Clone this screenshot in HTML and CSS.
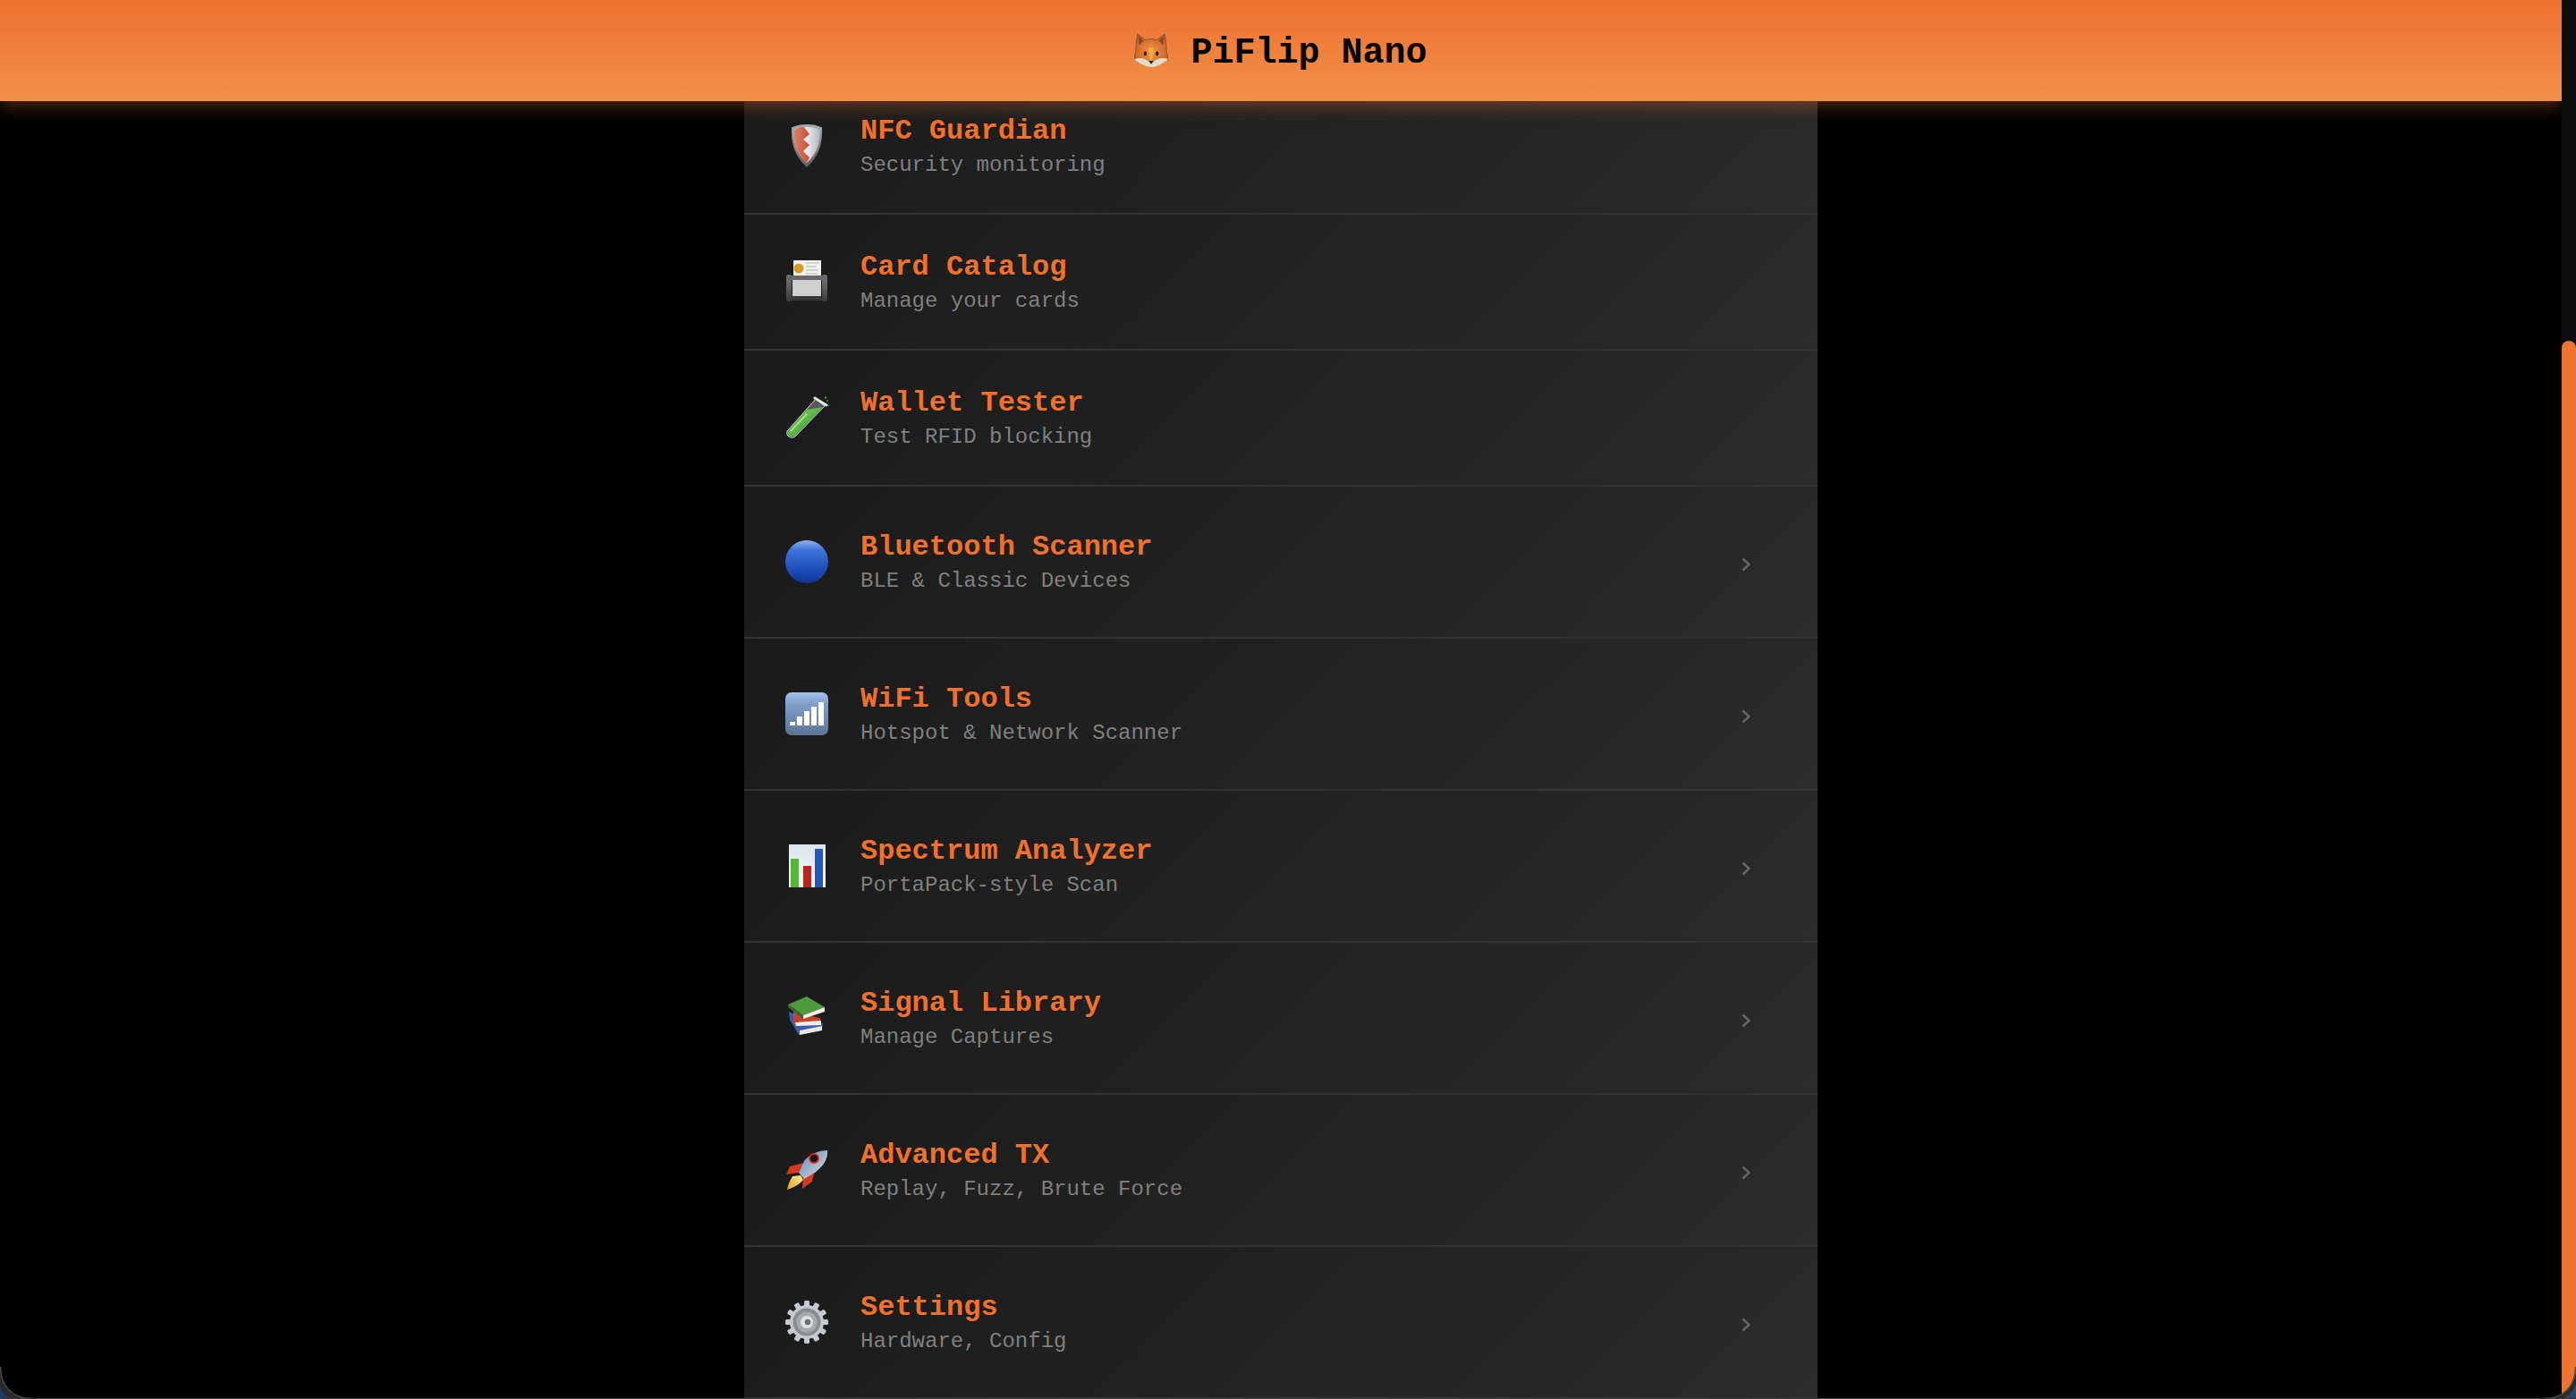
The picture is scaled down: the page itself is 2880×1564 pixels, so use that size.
FILE: index.html
```html
<!DOCTYPE html>
<html>
   <head>
      <title>PiFlip Nano</title>
      <link rel="stylesheet" href="styles.css">
   </head>
   <body>
      <div id="window">
         <main id="page">
            <header id="topbar">
               <svg class="fox" viewBox="0 0 40 40">
                  <defs>
                     <radialGradient id="foxFur" cx=".5" cy=".55" r=".6">
                        <stop offset="0" stop-color="#f09a45"/>
                        <stop offset="1" stop-color="#c9531f"/>
                     </radialGradient>
                  </defs>
                  <path d="M4 1 L13 8 C17 6.500 23 6.500 27 8 L36 1 C37.500 8 38 15 38 20 L40 31 L20 39.500 L0 31 L2 20 C2 15 2.500 8 4 1 Z" fill="url(#foxFur)" stroke="#6a5240" stroke-width=".8"/>
                  <path d="M5.500 4 L11 9 L6 14 Z M34.500 4 L29 9 L34 14 Z" fill="#7a4a2a"/>
                  <path d="M0 31 C6 28 13 30 20 35 C27 30 34 28 40 31 C33 36 27 40 20 40 C13 40 7 36 0 31 Z" fill="#e0dccd"/>
                  <path d="M17 17 L23 17 L21.500 32 L18.500 32 Z" fill="#f7ad3e"/>
                  <ellipse cx="13" cy="24" rx="1.800" ry="2.800" fill="#2a2622"/>
                  <ellipse cx="27" cy="24" rx="1.800" ry="2.800" fill="#2a2622"/>
                  <path d="M17 32.500 L23 32.500 L20 36.500 Z" fill="#1d1a18"/>
               </svg>
               <h1>PiFlip Nano</h1>
            </header>

            <div id="menu">
               <div class="row">
                  <svg class="icon" viewBox="0 0 48 48">
                     <defs>
                        <linearGradient id="shieldRim" x1="0" y1="0" x2="0" y2="1">
                           <stop offset="0" stop-color="#a8aaac"/>
                           <stop offset="1" stop-color="#5c5e60"/>
                        </linearGradient>
                        <linearGradient id="shieldSteel" x1="0" y1="0" x2="1" y2="0">
                           <stop offset=".4" stop-color="#f4f5f7"/>
                           <stop offset="1" stop-color="#b4b8c0"/>
                        </linearGradient>
                        <linearGradient id="shieldRed" x1="0" y1="0" x2="1" y2="0">
                           <stop offset="0" stop-color="#dd8068"/>
                           <stop offset="1" stop-color="#c94f36"/>
                        </linearGradient>
                     </defs>
                     <path d="M24 0 C30 0 36 1 41 3.500 C41.500 20 39 34 24 48 C9 34 6.500 20 7 3.500 C12 1 18 0 24 0 Z" fill="url(#shieldRim)"/>
                     <path d="M24 3 C29 3 34 4 38.500 6 C39 20 36 32 24 43 C12 32 9 20 9.500 6 C14 4 19 3 24 3 Z" fill="url(#shieldSteel)"/>
                     <path d="M21 3 C17 3.300 13 4.400 9.500 6 C9 20 12 32 24 43 L27 37 L20 30 L27 23 L20 17 L27 11 Z" fill="url(#shieldRed)"/>
                  </svg>
                  <div class="label">
                     <div class="name">NFC Guardian</div>
                     <div class="desc">Security monitoring</div>
                  </div>
               </div>

               <div class="row">
                  <svg class="icon" viewBox="0 0 48 48">
                     <defs>
                        <linearGradient id="cardLeg" x1="0" y1="0" x2="0" y2="1">
                           <stop offset="0" stop-color="#77797c"/>
                           <stop offset="1" stop-color="#3a3b3d"/>
                        </linearGradient>
                     </defs>
                     <rect x="9" y="0" width="31" height="20" fill="#f1f1ee"/>
                     <circle cx="15" cy="9" r="5.500" fill="#d99a28"/>
                     <path d="M23 3h14M23 7h12M23 11h14M23 15h13" stroke="#b4b4b0" stroke-width="1"/>
                     <rect x="8" y="22" width="32" height="18" fill="#d0d0d0"/>
                     <rect x="1" y="16" width="6" height="30" rx="2.500" fill="url(#cardLeg)"/>
                     <rect x="41" y="16" width="6" height="30" rx="2.500" fill="url(#cardLeg)"/>
                     <rect x="1" y="17" width="46" height="5" rx="1.500" fill="#66686b"/>
                     <rect x="6" y="40" width="36" height="5" fill="#38393b"/>
                  </svg>
                  <div class="label">
                     <div class="name">Card Catalog</div>
                     <div class="desc">Manage your cards</div>
                  </div>
               </div>

               <div class="row">
                  <svg class="icon" viewBox="0 0 48 48">
                     <defs>
                        <linearGradient id="tubeGreen" x1="0" y1="0" x2="1" y2="1">
                           <stop offset="0" stop-color="#86dc62"/>
                           <stop offset="1" stop-color="#2f8e2e"/>
                        </linearGradient>
                     </defs>
                     <path d="M34 3 L44 11 L11 45 C7 48 0 45 2 39 Z" fill="#55585a" stroke="#d4d6d4" stroke-width="1"/>
                     <path d="M24 15 L42 12 L11 44.500 C7 47 1 44 3 39 Z" fill="url(#tubeGreen)"/>
                     <path d="M6 39 L24 20" stroke="#b4ee9e" stroke-width="1.400" stroke-linecap="round"/>
                     <path d="M33 2 L46 10" stroke="#e2e4e2" stroke-width="3" stroke-linecap="round"/>
                     <circle cx="45" cy="1.500" r="1.200" fill="#3fa33a"/>
                     <circle cx="47" cy="5" r=".9" fill="#3fa33a"/>
                  </svg>
                  <div class="label">
                     <div class="name">Wallet Tester</div>
                     <div class="desc">Test RFID blocking</div>
                  </div>
               </div>

               <div class="row more">
                  <svg class="icon" viewBox="0 0 48 48">
                     <defs>
                        <linearGradient id="blueBall" x1="0" y1="0" x2="0" y2="1">
                           <stop offset="0" stop-color="#8fb4ee"/>
                           <stop offset=".22" stop-color="#3f74dc"/>
                           <stop offset=".7" stop-color="#1c4cb8"/>
                           <stop offset="1" stop-color="#113294"/>
                        </linearGradient>
                     </defs>
                     <circle cx="24" cy="24" r="24" fill="url(#blueBall)"/>
                  </svg>
                  <div class="label">
                     <div class="name">Bluetooth Scanner</div>
                     <div class="desc">BLE &amp; Classic Devices</div>
                  </div>
                  <svg class="chevron" viewBox="0 0 10 16"><path d="M1.500 1.500 L8.500 8 L1.500 14.500"/></svg>
               </div>

               <div class="row more">
                  <svg class="icon" viewBox="0 0 48 48">
                     <defs>
                        <linearGradient id="signalTile" x1="0" y1="0" x2="0" y2="1">
                           <stop offset="0" stop-color="#a2c2e8"/>
                           <stop offset=".3" stop-color="#7c9cc8"/>
                           <stop offset="1" stop-color="#5e7494"/>
                        </linearGradient>
                     </defs>
                     <rect width="48" height="48" rx="7" fill="url(#signalTile)"/>
                     <rect x="5" y="33" width="6" height="4" fill="#fff"/>
                     <rect x="13" y="27" width="6" height="10" fill="#fff"/>
                     <rect x="21" y="21" width="6" height="16" fill="#fff"/>
                     <rect x="29" y="16" width="6" height="21" fill="#fff"/>
                     <rect x="37" y="11" width="6" height="26" fill="#fff"/>
                  </svg>
                  <div class="label">
                     <div class="name">WiFi Tools</div>
                     <div class="desc">Hotspot &amp; Network Scanner</div>
                  </div>
                  <svg class="chevron" viewBox="0 0 10 16"><path d="M1.500 1.500 L8.500 8 L1.500 14.500"/></svg>
               </div>

               <div class="row more">
                  <svg class="icon" viewBox="0 0 48 48">
                     <defs>
                        <linearGradient id="chartPaper" x1="0" y1="0" x2="0" y2="1">
                           <stop offset="0" stop-color="#dbe5ec"/>
                           <stop offset="1" stop-color="#f6f8fa"/>
                        </linearGradient>
                     </defs>
                     <rect x="4" y="0" width="41" height="48" fill="url(#chartPaper)"/>
                     <rect x="6" y="16" width="9" height="32" fill="#57b53c"/>
                     <rect x="20" y="24" width="9" height="24" fill="#b5281e"/>
                     <rect x="33" y="5" width="9" height="43" fill="#2459bc"/>
                  </svg>
                  <div class="label">
                     <div class="name">Spectrum Analyzer</div>
                     <div class="desc">PortaPack-style Scan</div>
                  </div>
                  <svg class="chevron" viewBox="0 0 10 16"><path d="M1.500 1.500 L8.500 8 L1.500 14.500"/></svg>
               </div>

               <div class="row more">
                  <svg class="icon" viewBox="0 0 48 48">
                     <path d="M4 17 L5 26 L15 43 L41 37 L42 30 L20 24 Z" fill="#3b5cab"/>
                     <path d="M16 38 L41 33 L41 38 L16 43 Z" fill="#e8e8e0"/>
                     <path d="M9 16 L9 29 L12 33 L40 31 L39 24 L20 20 Z" fill="#c8402e"/>
                     <path d="M11 29 L40 27 L40 32 L12 33 Z" fill="#eeeee6"/>
                     <path d="M3 9 L24 0 L44 12 L20 21 Z" fill="#4f9a3e"/>
                     <path d="M3 9 L20 21 L20 25 L3 12 Z" fill="#2f6e2a"/>
                     <path d="M20 21 L44 12 L44 17 L20 25 Z" fill="#f2f2ea"/>
                  </svg>
                  <div class="label">
                     <div class="name">Signal Library</div>
                     <div class="desc">Manage Captures</div>
                  </div>
                  <svg class="chevron" viewBox="0 0 10 16"><path d="M1.500 1.500 L8.500 8 L1.500 14.500"/></svg>
               </div>

               <div class="row more">
                  <svg class="icon" viewBox="0 0 48 48">
                     <defs>
                        <linearGradient id="rocketBody" x1="0" y1="0" x2="1" y2="1">
                           <stop offset="0" stop-color="#4f8ad0"/>
                           <stop offset=".55" stop-color="#a8b8c8"/>
                           <stop offset="1" stop-color="#d4d8da"/>
                        </linearGradient>
                        <linearGradient id="rocketFlame" x1="1" y1="0" x2="0" y2="1">
                           <stop offset="0" stop-color="#fff0a0"/>
                           <stop offset="1" stop-color="#f09a18"/>
                        </linearGradient>
                     </defs>
                     <path d="M20 16 L5 20 L1 29 L15 27 Z" fill="#d8391f"/>
                     <path d="M32 28 L30 37 L19 45 L20 32 Z" fill="#d8391f"/>
                     <path d="M8 31 C5 36 3 41 2 46 C8 44 15 41 20 35 L17 30 Z" fill="url(#rocketFlame)"/>
                     <path d="M47 2 C38 2 27 6 21 14 L15 27 L21 34 L33 27 C42 20 48 12 47 2 Z" fill="url(#rocketBody)"/>
                     <circle cx="32" cy="11" r="5" fill="#141416" stroke="#d22c20" stroke-width="2"/>
                  </svg>
                  <div class="label">
                     <div class="name">Advanced TX</div>
                     <div class="desc">Replay, Fuzz, Brute Force</div>
                  </div>
                  <svg class="chevron" viewBox="0 0 10 16"><path d="M1.500 1.500 L8.500 8 L1.500 14.500"/></svg>
               </div>

               <div class="row more">
                  <svg class="icon" viewBox="0 0 48 48">
                     <g fill="#c4c8cf">
                        <circle cx="24" cy="24" r="19"/>
                        <rect x="21" y="0" width="6" height="48" rx="1.500"/>
                        <rect x="21" y="0" width="6" height="48" rx="1.500" transform="rotate(30 24 24)"/>
                        <rect x="21" y="0" width="6" height="48" rx="1.500" transform="rotate(60 24 24)"/>
                        <rect x="21" y="0" width="6" height="48" rx="1.500" transform="rotate(90 24 24)"/>
                        <rect x="21" y="0" width="6" height="48" rx="1.500" transform="rotate(120 24 24)"/>
                        <rect x="21" y="0" width="6" height="48" rx="1.500" transform="rotate(150 24 24)"/>
                     </g>
                     <circle cx="24" cy="24" r="15.500" fill="#8a8c90"/>
                     <circle cx="24" cy="24" r="11.500" fill="#a8aaae"/>
                     <circle cx="24" cy="24" r="7" fill="#dfe1e5"/>
                     <circle cx="25" cy="24" r="3.200" fill="#6a6c70"/>
                  </svg>
                  <div class="label">
                     <div class="name">Settings</div>
                     <div class="desc">Hardware, Config</div>
                  </div>
                  <svg class="chevron" viewBox="0 0 10 16"><path d="M1.500 1.500 L8.500 8 L1.500 14.500"/></svg>
               </div>
            </div>
         </main>

         <div id="scrolltrack"><div id="scrollthumb"></div></div>

         <!-- window corners, desktop shows through behind them -->
         <svg class="corner left" viewBox="0 0 36 36"><path d="M0 0 C0 22 14 36 36 36 L0 36 Z" fill="#2a2a2a"/><path d="M.5 0 C.5 22 14 35.500 36 35.500" fill="none" stroke="#4a4a4a" stroke-width="1.500"/><path d="M0 20 C2 30 6 34 16 36 L0 36 Z" fill="#1d3c62"/></svg>
         <svg class="corner right" viewBox="0 0 36 36"><path d="M36 0 C36 22 22 36 0 36 L36 36 Z" fill="#2a2a2a"/><path d="M35.500 0 C35.500 22 22 35.500 0 35.500" fill="none" stroke="#4a4a4a" stroke-width="1.500"/><path d="M36 18 C34 27 28 32 20 36 L36 36 Z" fill="#2c4568"/></svg>
      </div>
   </body>
</html>
```

FILE: styles.css
```css
html,
body {
   height: 100%;
   margin: 0px;
   padding: 0px;
   background-color: black;
}

body {
   font-family: "Liberation Mono", "Courier New", monospace;
}

#window {
   display: flex;
   position: relative;
   height: 1564px;
   overflow: hidden;
   border-bottom: 1px solid #3a3a3a;
   box-sizing: border-box;
}

#page {
   flex: 1;
   position: relative;
   overflow: hidden;
}

#topbar {
   position: absolute;
   top: 0;
   left: 0;
   right: 0;
   z-index: 2;
   height: 113px;
   display: flex;
   align-items: center;
   justify-content: center;
   gap: 25px;
   background: linear-gradient(180deg, #ee7130, #f19049);
   box-shadow: 0 4px 20px rgba(240, 112, 46, 0.4);
}

#topbar h1 {
   margin: 5px 0 0;
   font-size: 40px;
   font-weight: bold;
   color: black;
}

.fox {
   width: 38px;
   height: 38px;
   margin-top: -2px;
}

#menu {
   width: 1200px;
   margin: 88px auto 0;
}

.row {
   display: flex;
   align-items: center;
   box-sizing: border-box;
   height: 152px;
   padding: 0 75px 0 46px;
   border-bottom: 2px solid #333;
   background: linear-gradient(135deg, #1a1a1a, #2b2b2b);
}

.row.more {
   height: 170px;
}

.icon {
   width: 48px;
   height: 48px;
   flex-shrink: 0;
   margin-right: 36px;
}

.label {
   flex: 1;
   margin-top: 2px;
}

.name {
   font-size: 32px;
   font-weight: bold;
   line-height: 36px;
   margin-bottom: 6px;
   color: #f0702e;
}

.desc {
   font-size: 24px;
   line-height: 28px;
   color: #808080;
}

.chevron {
   width: 10px;
   height: 16px;
   margin-top: 6px;
   fill: none;
   stroke: #666;
   stroke-width: 2.500;
}

#scrolltrack {
   width: 16px;
   padding-top: 381px;
   box-sizing: border-box;
   background-color: #0d0d0d;
   flex-shrink: 0;
}

#scrollthumb {
   height: 100%;
   background-color: #ee7531;
   border-radius: 8px 8px 0 0;
}

.corner {
   position: absolute;
   bottom: -1px;
   width: 36px;
   height: 36px;
   z-index: 3;
}

.corner.left {
   left: 0;
}

.corner.right {
   right: 0;
}
```
